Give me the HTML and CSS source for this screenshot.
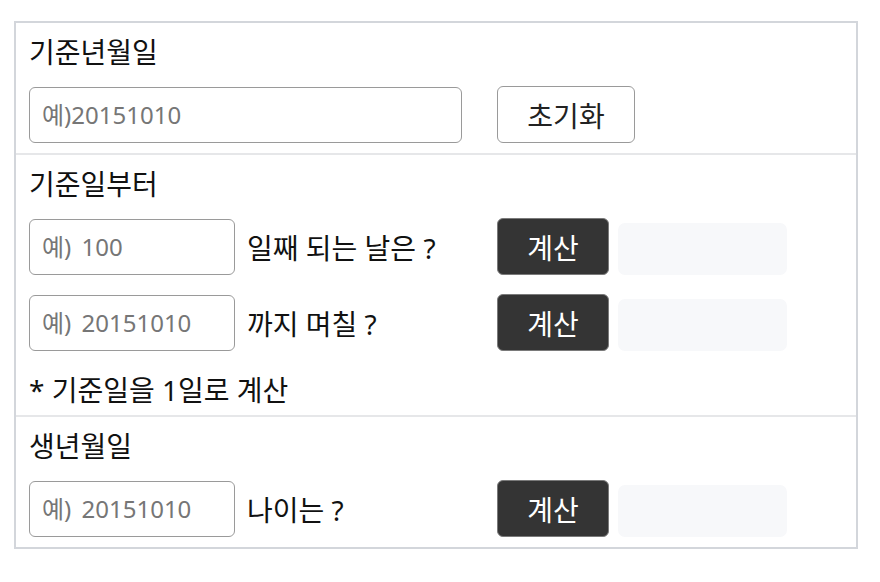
FILE: index.html
```html
<!DOCTYPE html>
<html lang="ko">
<head>
<meta charset="utf-8">
<link rel="stylesheet" href="styles.css">
</head>
<body>
<div class="box">
  <section class="sec">
    <div class="title">기준년월일</div>
    <div class="row">
      <input class="inp inp-wide" type="text" placeholder="예)20151010">
      <button class="btn btn-light">초기화</button>
    </div>
  </section>
  <section class="sec sec-div sec-mid">
    <div class="title">기준일부터</div>
    <div class="row">
      <input class="inp" type="text" placeholder="예) 100">
      <span class="label">일째 되는 날은 ?</span>
      <button class="btn btn-dark">계산</button>
      <div class="result"></div>
    </div>
    <div class="row row-next">
      <input class="inp" type="text" placeholder="예) 20151010">
      <span class="label">까지 며칠 ?</span>
      <button class="btn btn-dark">계산</button>
      <div class="result"></div>
    </div>
    <div class="note">* 기준일을 1일로 계산</div>
  </section>
  <section class="sec sec-div">
    <div class="title">생년월일</div>
    <div class="row">
      <input class="inp" type="text" placeholder="예) 20151010">
      <span class="label">나이는 ?</span>
      <button class="btn btn-dark">계산</button>
      <div class="result"></div>
    </div>
  </section>
</div>
</body>
</html>
```
FILE: styles.css
```css
html, body {
  margin: 0;
  padding: 0;
  background: #fff;
}
body {
  padding: 21px 0 0 14px;
  font-family: "Noto Sans", "Noto Sans CJK KR", sans-serif;
  font-size: 28px;
  color: #111;
}
.box {
  width: 840px;
  border: 2px solid #d3d6db;
}
.sec {
  padding: 10px 13px 10px 13px;
  display: flex;
  flex-direction: column;
}
.sec-div {
  border-top: 2px solid #e6e7e9;
}
.sec-mid {
  padding-bottom: 6px;
}
.title {
  height: 38px;
  line-height: 38px;
  margin-bottom: 15px;
}
.row {
  display: flex;
  align-items: center;
  height: 57px;
}
.row-next {
  margin-top: 19px;
}
.inp {
  box-sizing: border-box;
  width: 206px;
  height: 56px;
  border: 1px solid #9a9a9a;
  border-radius: 6px;
  padding: 0 12px;
  font-family: inherit;
  font-size: 24px;
  word-spacing: 4px;
  color: #333;
  outline: none;
  background: #fff;
}
.inp::placeholder {
  color: #767676;
}
.inp-wide {
  width: 433px;
  margin-right: 35px;
}
.label {
  width: 250px;
  margin-left: 12px;
  white-space: nowrap;
}
.btn {
  box-sizing: border-box;
  height: 57px;
  border-radius: 6px;
  font-family: inherit;
  font-size: 28px;
  padding: 0;
  cursor: pointer;
}
.btn-light {
  width: 138px;
  background: #fff;
  border: 1px solid #9a9a9a;
  color: #222;
}
.btn-dark {
  width: 112px;
  background: #343434;
  border: 1px solid #7a7a7a;
  color: #fff;
}
.result {
  width: 169px;
  height: 52px;
  margin-left: 9px;
  margin-top: 4px;
  border-radius: 7px;
  background: #f7f8fa;
}
.note {
  height: 38px;
  line-height: 38px;
  margin-top: 20px;
}
```
